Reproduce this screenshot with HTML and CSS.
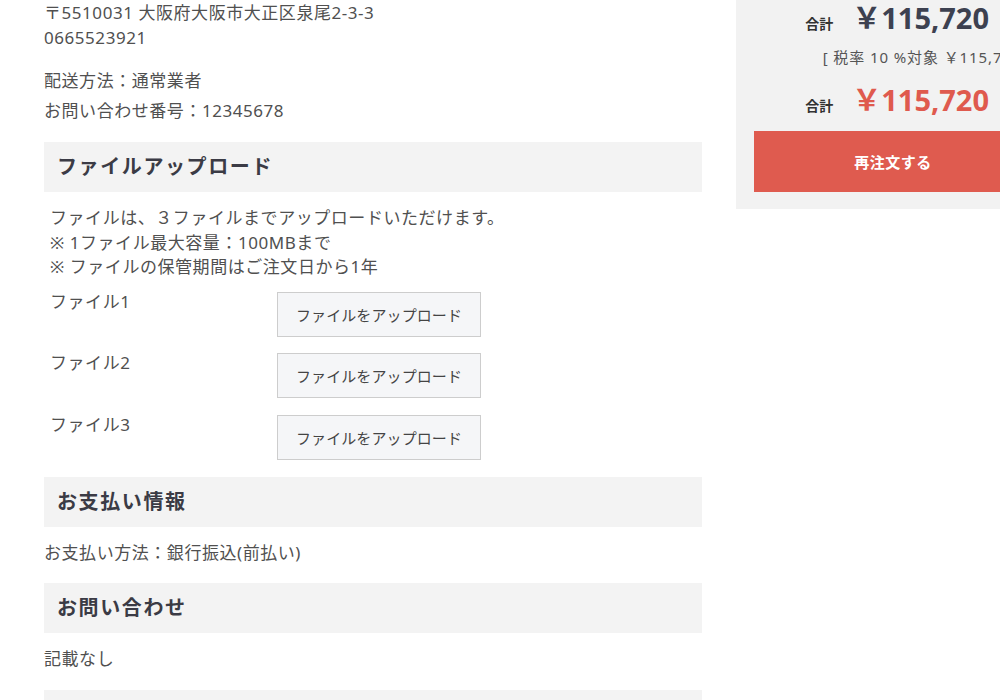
FILE: index.html
```html
<!DOCTYPE html>
<html lang="ja">
<head>
<meta charset="utf-8">
<title>注文詳細</title>
<link rel="stylesheet" href="styles.css">
</head>
<body>
<div class="page">
  <main class="main">
    <div class="addr">
      <p>〒5510031 大阪府大阪市大正区泉尾2-3-3</p>
      <p>0665523921</p>
    </div>
    <div class="meta">
      <p>配送方法：通常業者</p>
      <p>お問い合わせ番号：12345678</p>
    </div>

    <section class="sec">
      <h2 class="sec-title">ファイルアップロード</h2>
      <div class="file-body">
        <p>ファイルは、３ファイルまでアップロードいただけます。</p>
        <p>※ 1ファイル最大容量：100MBまで</p>
        <p>※ ファイルの保管期間はご注文日から1年</p>
        <div class="file-rows">
          <div class="file-row"><span class="file-label">ファイル1</span><button class="upload-btn" type="button">ファイルをアップロード</button></div>
          <div class="file-row"><span class="file-label">ファイル2</span><button class="upload-btn" type="button">ファイルをアップロード</button></div>
          <div class="file-row"><span class="file-label">ファイル3</span><button class="upload-btn" type="button">ファイルをアップロード</button></div>
        </div>
      </div>
    </section>

    <section class="sec sec--after-files">
      <h2 class="sec-title">お支払い情報</h2>
      <p class="sec-text">お支払い方法：銀行振込(前払い)</p>
    </section>

    <section class="sec sec--text">
      <h2 class="sec-title">お問い合わせ</h2>
      <p class="sec-text">記載なし</p>
    </section>

    <section class="sec sec--last">
      <h2 class="sec-title">&nbsp;</h2>
    </section>
  </main>

  <aside class="side">
    <div class="total-row"><span class="total-label">合計</span><span class="total-amt">￥115,720</span></div>
    <p class="tax">[ 税率 10 %対象 ￥115,720 ]</p>
    <div class="total-row total-row--final"><span class="total-label">合計</span><span class="total-amt total-amt--red">￥115,720</span></div>
    <button class="reorder" type="button">再注文する</button>
  </aside>
</div>
</body>
</html>
```

FILE: styles.css
```css
html, body {
  margin: 0;
  padding: 0;
  overflow: hidden;
  background: #fff;
}
body {
  font-family: "Noto Sans", "Noto Sans CJK JP", sans-serif;
  color: #505050;
  font-size: 17px;
  letter-spacing: 0.55px;
}
p { margin: 0; }

.page {
  display: grid;
  grid-template-columns: 658px 314px;
  column-gap: 34px;
  padding-left: 44px;
  width: 1060px;
  align-items: start;
}

.addr p { line-height: 25px; }
.meta { margin-top: 16px; }
.meta p { line-height: 30px; }

.sec { margin-top: 16px; }
.sec--after-files { margin-top: 17px; }
.sec--text { margin-top: 18px; }
.sec--last { margin-top: 19px; }
.sec-title {
  margin: 0;
  height: 50px;
  line-height: 50px;
  padding-left: 13px;
  background: #f3f3f3;
  font-size: 20px;
  font-weight: 700;
  letter-spacing: 1.6px;
  color: #3b3b45;
}

.file-body {
  padding: 14px 6px 0;
}
.file-body > p { line-height: 24.5px; }
.file-rows {
  margin-top: 10px;
  display: flex;
  flex-direction: column;
  gap: 14.5px;
}
.file-row {
  display: grid;
  grid-template-columns: 227px 204px;
  align-items: start;
}
.file-label { line-height: 24px; }
.upload-btn {
  margin-top: 2px;
  height: 45px;
  width: 204px;
  background: #f5f6f8;
  border: 1px solid #cdcdcd;
  border-radius: 0;
  font-family: "Noto Sans", "Noto Sans CJK JP", sans-serif;
  font-size: 15px;
  letter-spacing: 0.1px;
  color: #444;
  padding: 0;
}

.sec-text {
  margin-top: 14px;
  line-height: 24px;
}

.side {
  background: #f2f2f2;
  padding: 0 18px 17px;
}
.total-row {
  display: flex;
  justify-content: flex-end;
  align-items: baseline;
  gap: 19px;
  padding-right: 43px;
  height: 36px;
}
.total-row--final { margin-top: 13px; }
.total-label {
  font-size: 14px;
  line-height: 14px;
  font-weight: 700;
  color: #333;
  letter-spacing: 0;
}
.total-amt {
  font-size: 29px;
  line-height: 36px;
  font-weight: 700;
  color: #3d4150;
  letter-spacing: 0;
}
.total-amt--red { color: #df5a4e; }
.tax {
  margin-top: 9px;
  line-height: 24px;
  font-size: 15px;
  letter-spacing: 0.9px;
  text-align: right;
  white-space: nowrap;
  color: #555;
}
.reorder {
  display: block;
  margin-top: 13px;
  width: 100%;
  height: 61px;
  border: none;
  border-radius: 0;
  background: #df5b4f;
  color: #fff;
  font-family: "Noto Sans", "Noto Sans CJK JP", sans-serif;
  font-size: 15px;
  font-weight: 700;
  letter-spacing: 0.5px;
}
```
